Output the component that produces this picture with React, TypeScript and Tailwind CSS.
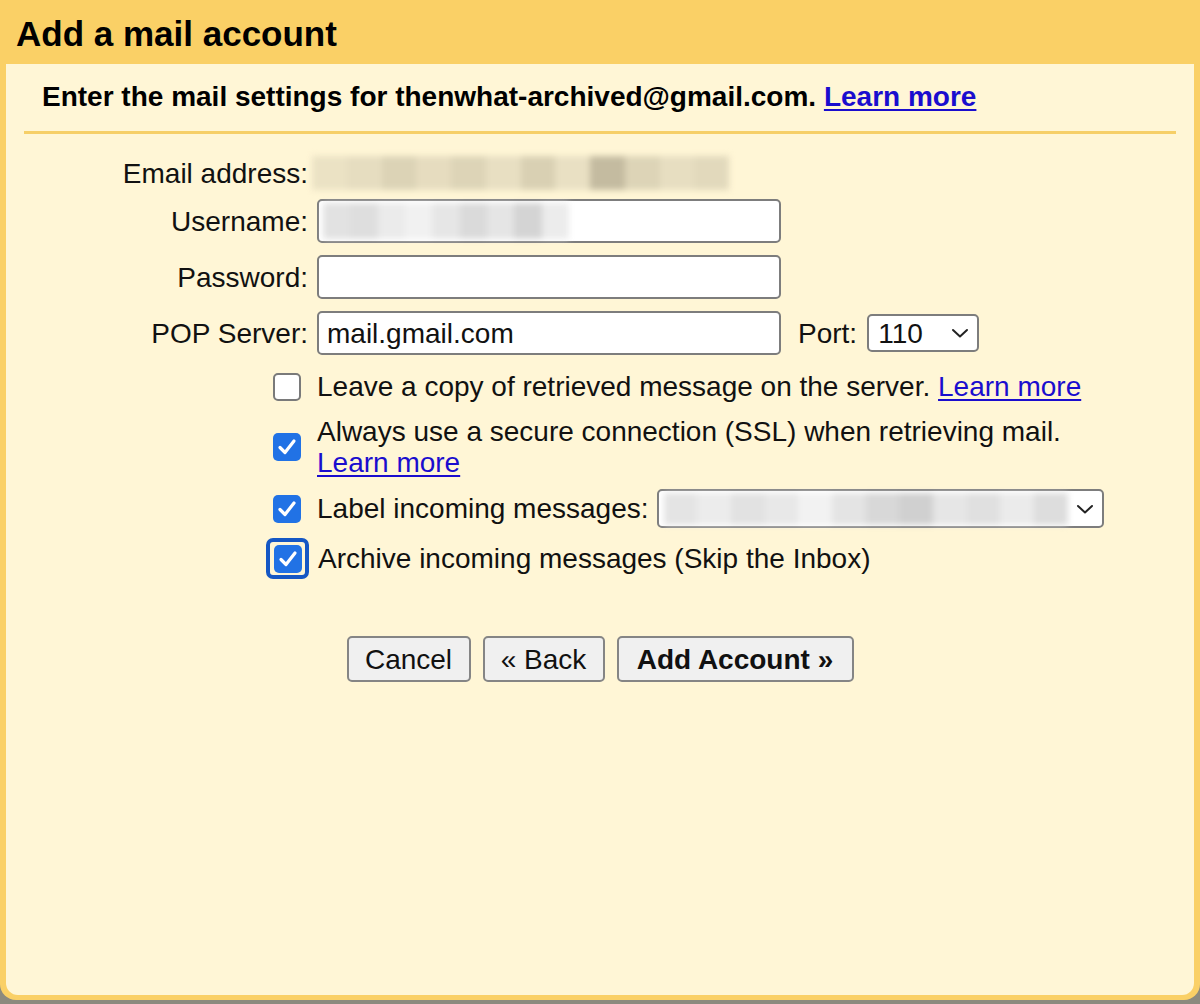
import React from "react";

const font = "font-['Liberation_Sans',Arial,sans-serif]";

function Check({ checked, focused }: { checked?: boolean; focused?: boolean }) {
  const box = checked ? (
    <div className="w-[28px] h-[28px] rounded-[5px] bg-[#2172e5] flex items-center justify-center">
      <svg width="24" height="24" viewBox="0 0 24 24" fill="none">
        <path
          d="M5 12.5 L10 17.5 L19 6"
          stroke="white"
          strokeWidth="3.2"
          strokeLinecap="round"
          strokeLinejoin="round"
        />
      </svg>
    </div>
  ) : (
    <div className="w-[28px] h-[28px] rounded-[5px] border-2 border-[#7a7a7a] bg-white" />
  );
  if (focused) {
    return (
      <div className="w-[43px] h-[41px] -mx-[7px] rounded-[7px] border-[4px] border-[#1557c4] flex items-center justify-center">
        {box}
      </div>
    );
  }
  return box;
}

// Pixelated stand-in for the blurred-out personal data
function Blur({ cells, className }: { cells: string[]; className: string }) {
  return (
    <div className={`flex blur-[3px] ${className}`}>
      {cells.map((c, i) => (
        <div key={i} className="flex-1 h-full" style={{ backgroundColor: c }} />
      ))}
    </div>
  );
}

function Chevron() {
  return (
    <svg width="18" height="12" viewBox="0 0 18 12" fill="none">
      <path d="M2 3 L9 9.5 L16 3" stroke="#222" strokeWidth="2" strokeLinecap="round" strokeLinejoin="round" />
    </svg>
  );
}

const link = "text-[#1a0dce] underline underline-offset-[3px] decoration-[2px]";

export default function App() {
  return (
    <div className={`w-[1200px] h-[1004px] bg-[#8c8a7e] ${font} text-[#111]`}>
      <div className="h-[1000px] bg-[#fad066] rounded-b-[16px] flex flex-col px-[6px] pb-[5px]">
        <h1 className="h-[64px] pl-[10px] pt-[14px] text-[35px] leading-[40px] font-bold text-black">
          Add a mail account
        </h1>

        <div className="flex-1 bg-[#fff6d6] rounded-b-[12px] px-[18px] flex flex-col">
          <p className="h-[67px] pl-[18px] pt-[16px] text-[28px] leading-[34px] font-bold text-black">
            Enter the mail settings for thenwhat-archived@gmail.com.{" "}
            <span className={link}>Learn more</span>
          </p>
          <div className="h-[3px] bg-[#f6cf68]" />

          <div className="flex flex-col text-[28px] leading-[31px] mt-[22px]">
            <div className="flex items-center h-[34px]">
              <div className="w-[284px] text-right">Email address:</div>
              <Blur
                className="ml-[4px] w-[417px] h-[34px]"
                cells={["#ebe2c4", "#e6ddc0", "#dcd3b6", "#e6dcbf", "#ddd4b7", "#e8dfc2", "#d9d0b3", "#e9e0c3", "#c4bba0", "#ddd4b7", "#e7dec1", "#e2d9bc"]}
              />
            </div>

            <div className="flex items-center h-[44px] mt-[9px]">
              <div className="w-[284px] text-right">Username:</div>
              <div className="ml-[9px] w-[464px] h-[44px] bg-white border-2 border-[#7d7d7d] rounded-[5px] px-[4px] flex items-center">
                <Blur
                  className="w-[246px] h-[36px]"
                  cells={["#e2e2e2", "#dedede", "#ebebeb", "#f1f1f1", "#e6e6e6", "#dadada", "#e5e5e5", "#d4d4d4", "#ececec"]}
                />
              </div>
            </div>

            <div className="flex items-center h-[44px] mt-[12px]">
              <div className="w-[284px] text-right">Password:</div>
              <div className="ml-[9px] w-[464px] h-[44px] bg-white border-2 border-[#7d7d7d] rounded-[5px]" />
            </div>

            <div className="flex items-center h-[44px] mt-[12px]">
              <div className="w-[284px] text-right">POP Server:</div>
              <div className="ml-[9px] w-[464px] h-[44px] bg-white border-2 border-[#7d7d7d] rounded-[5px] px-[8px] flex items-center">
                mail.gmail.com
              </div>
              <div className="ml-[17px]">Port:</div>
              <div className="ml-[10px] w-[112px] h-[38px] bg-white border-2 border-[#7d7d7d] rounded-[5px] pl-[9px] pr-[8px] flex items-center justify-between">
                <span>110</span>
                <Chevron />
              </div>
            </div>

            <div className="ml-[249px] mt-[16px] flex flex-col">
              <div className="flex items-center gap-[16px]">
                <Check />
                <span>
                  Leave a copy of retrieved message on the server.{" "}
                  <span className={link}>Learn more</span>
                </span>
              </div>

              <div className="flex items-center gap-[16px] mt-[14px]">
                <Check checked />
                <span>
                  Always use a secure connection (SSL) when retrieving mail.
                  <br />
                  <span className={link}>Learn more</span>
                </span>
              </div>

              <div className="flex items-center gap-[16px] mt-[11px]">
                <Check checked />
                <span>Label incoming messages:</span>
                <div className="-ml-[8px] w-[447px] h-[39px] bg-white border-2 border-[#7d7d7d] rounded-[5px] pl-[5px] pr-[8px] flex items-center justify-between">
                  <Blur
                    className="w-[404px] h-[32px]"
                    cells={["#e4e4e4", "#ececec", "#e2e2e2", "#e8e8e8", "#f2f2f2", "#e4e4e4", "#d8d8d8", "#d0d0d0", "#e6e6e6", "#e0e0e0", "#ebebeb", "#dddddd"]}
                  />
                  <Chevron />
                </div>
              </div>

              <div className="flex items-center gap-[16px] mt-[10px]">
                <Check checked focused />
                <span>Archive incoming messages (Skip the Inbox)</span>
              </div>
            </div>

            <div className="flex justify-center gap-[12px] mt-[57px]">
              <button className="w-[124px] h-[46px] bg-[#f0f0f0] border-2 border-[#858585] rounded-[5px] text-[28px]">
                Cancel
              </button>
              <button className="w-[122px] h-[46px] bg-[#f0f0f0] border-2 border-[#858585] rounded-[5px] text-[28px]">
                « Back
              </button>
              <button className="w-[237px] h-[46px] bg-[#f0f0f0] border-2 border-[#858585] rounded-[5px] text-[28px] font-bold">
                Add Account »
              </button>
            </div>
          </div>
        </div>
      </div>
    </div>
  );
}
